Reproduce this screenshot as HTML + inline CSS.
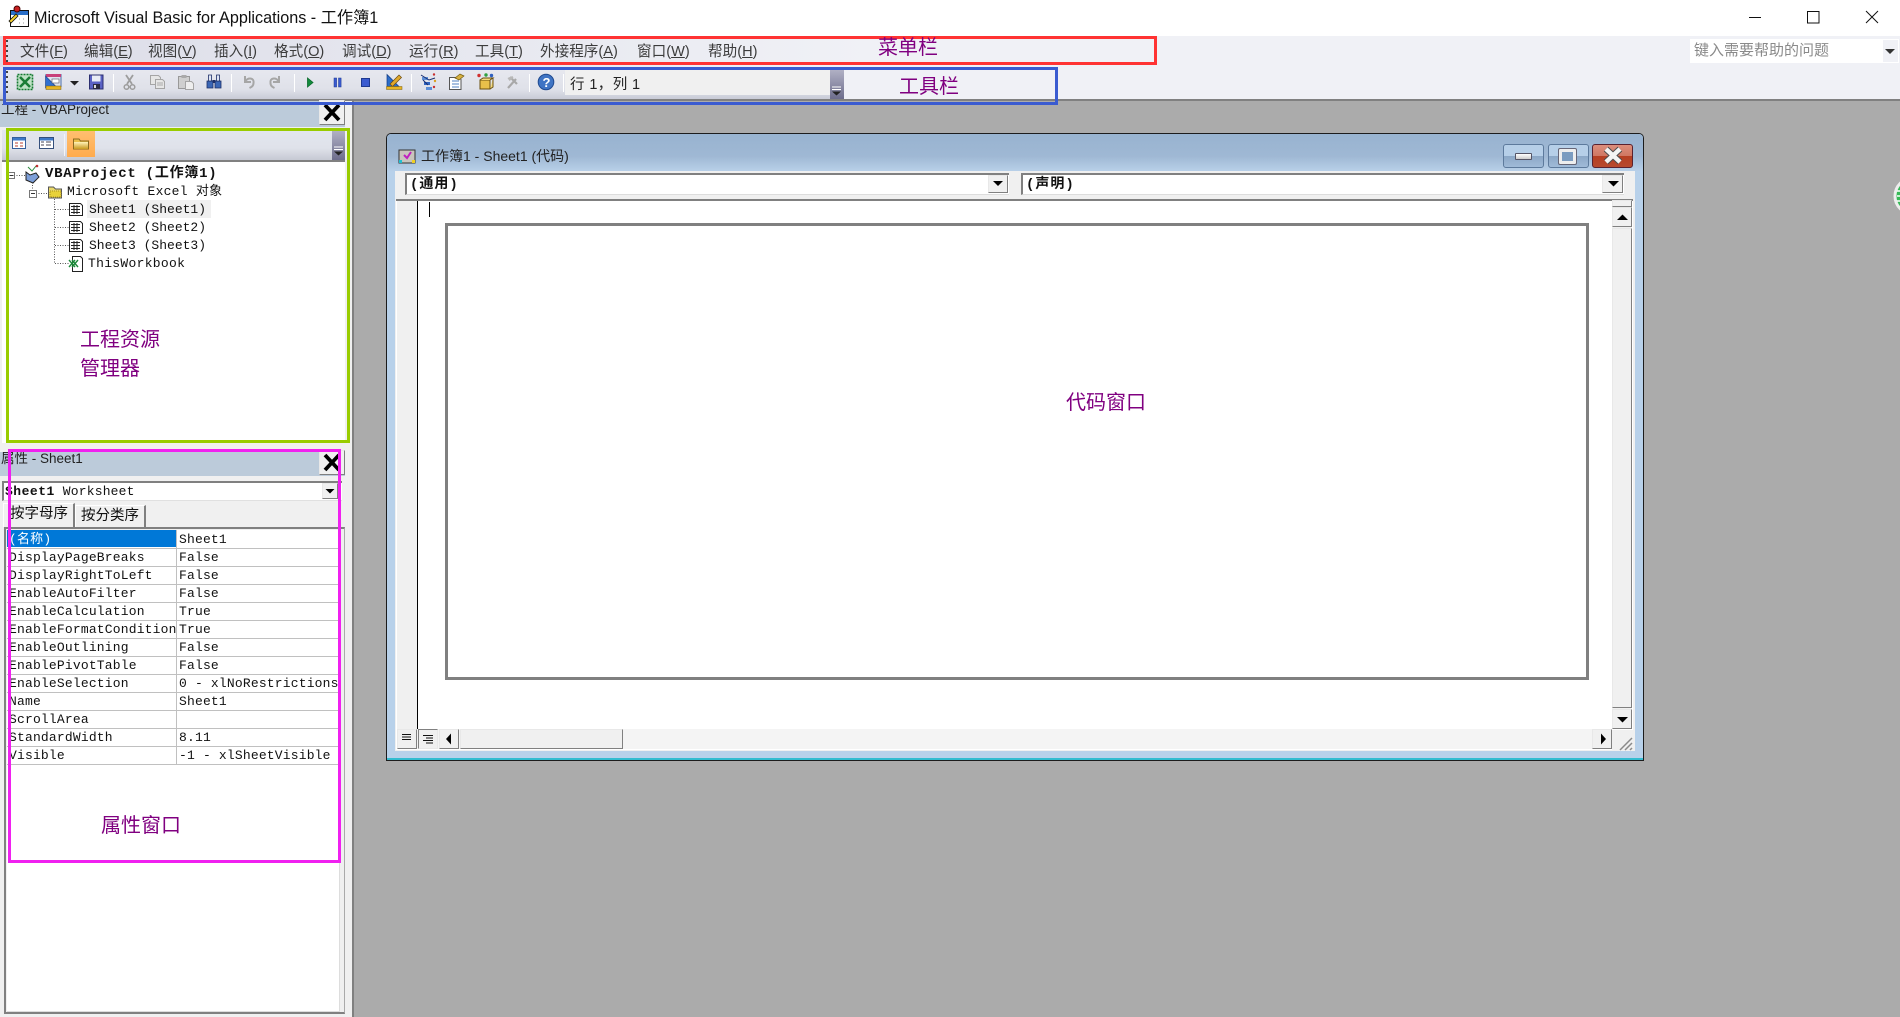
<!DOCTYPE html>
<html><head><meta charset="utf-8"><style>
html,body{margin:0;padding:0;width:1900px;height:1017px;overflow:hidden;background:#fff}
body{position:relative;font-family:"Liberation Sans","Noto Sans CJK SC",sans-serif}
.a{position:absolute;box-sizing:border-box}
.t{position:absolute;white-space:nowrap}
.m{font-size:14.6px;color:#3c3c3c;top:42px;height:20px;line-height:20px}
.c{font-family:"Liberation Mono","Noto Sans CJK SC",monospace;font-size:13px;letter-spacing:.18px;color:#111;white-space:nowrap;position:absolute;line-height:18px}
.lab{position:absolute;white-space:nowrap;color:#800080;font-size:20px;line-height:24px;font-family:"Liberation Sans","Noto Sans CJK SC",sans-serif}
.hd{font-size:13.5px;color:#222;line-height:18px}
.row{position:absolute;left:7px;width:331px;height:18px;border-bottom:1px solid #c0c0c0}
.btn{background:#f0f0f0;border:1px solid;border-color:#e8e8e8 #808080 #808080 #e8e8e8;position:absolute;box-sizing:border-box}
</style></head><body>

<!-- top chrome -->
<div class="a" style="left:0;top:36px;width:1900px;height:31px;background:linear-gradient(90deg,#dcdde8,#f0f1f6 870px)"></div>
<div class="a" style="left:0;top:67px;width:1900px;height:32px;background:#f0f1f6"></div>
<div class="a" style="left:0;top:67px;width:843px;height:32px;background:linear-gradient(#e8e9f0,#dfe1e9 70%,#c8cbd6)"></div>
<div class="a" style="left:0;top:99px;width:1900px;height:2px;background:#808080"></div>
<div class="a" style="left:352px;top:101px;width:1548px;height:916px;background:#ababab"></div>

<div class="t" style="left:34px;top:8px;font-size:16.2px;line-height:20px;color:#111">Microsoft Visual Basic for Applications - 工作簿1</div>

<div class="t m" style="left:20px">文件(<u>F</u>)</div>
<div class="t m" style="left:84px">编辑(<u>E</u>)</div>
<div class="t m" style="left:148px">视图(<u>V</u>)</div>
<div class="t m" style="left:214px">插入(<u>I</u>)</div>
<div class="t m" style="left:274px">格式(<u>O</u>)</div>
<div class="t m" style="left:342px">调试(<u>D</u>)</div>
<div class="t m" style="left:409px">运行(<u>R</u>)</div>
<div class="t m" style="left:475px">工具(<u>T</u>)</div>
<div class="t m" style="left:540px">外接程序(<u>A</u>)</div>
<div class="t m" style="left:637px">窗口(<u>W</u>)</div>
<div class="t m" style="left:708px">帮助(<u>H</u>)</div>

<div class="a" style="left:1690px;top:39px;width:209px;height:24px;background:#fff"></div>
<div class="a" style="left:1883px;top:40px;width:15px;height:22px;background:#f0f1f6"></div>
<div class="t" style="left:1694px;top:41px;font-size:15px;line-height:20px;color:#8a8a8a">键入需要帮助的问题</div>

<div class="a" style="left:565px;top:70px;width:265px;height:25px;background:#f0f0f0"></div>
<div class="a" style="left:830px;top:70px;width:14px;height:29px;background:linear-gradient(#b0b0c4,#6d6d8c)"></div>
<div class="t" style="left:570px;top:75px;font-size:14.5px;letter-spacing:.4px;line-height:20px;color:#222">行 1，列 1</div>

<!-- project panel -->
<div class="a" style="left:0;top:101px;width:352px;height:916px;background:#f0f0f0"></div>
<div class="a" style="left:352px;top:101px;width:2px;height:916px;background:#808080"></div>
<div class="a" style="left:0;top:101px;width:345px;height:26px;background:#bccbda"></div>
<div class="t hd" style="left:1px;top:101px">工程 - VBAProject</div>
<div class="btn" style="left:319px;top:100px;width:26px;height:25px;font-size:0"></div>
<div class="a" style="left:2px;top:130px;width:343px;height:30px;background:linear-gradient(#e3e6ee,#dfe2ea 60%,#c6c9d3)"></div>
<div class="a" style="left:67px;top:131px;width:28px;height:26px;background:linear-gradient(#ffbf70,#ffab4e)"></div>
<div class="a" style="left:332px;top:131px;width:13px;height:29px;background:linear-gradient(#b0b0c4,#6d6d8c)"></div>
<div class="a" style="left:2px;top:160px;width:343px;height:283px;background:#fff;border-top:2px solid #808080"></div>
<div class="a" style="left:87px;top:200px;width:124px;height:18px;background:#f0f0f0"></div>
<div class="c" style="left:45px;top:165px;font-weight:bold;font-size:14px;letter-spacing:.75px">VBAProject (工作簿1)</div>
<div class="c" style="left:67px;top:183px;letter-spacing:.25px">Microsoft Excel 对象</div>
<div class="c" style="left:89px;top:201px;letter-spacing:0">Sheet1 (Sheet1)</div>
<div class="c" style="left:89px;top:219px;letter-spacing:0">Sheet2 (Sheet2)</div>
<div class="c" style="left:89px;top:237px;letter-spacing:0">Sheet3 (Sheet3)</div>
<div class="c" style="left:88px;top:255px;letter-spacing:.3px">ThisWorkbook</div>

<!-- properties panel -->
<div class="a" style="left:0;top:452px;width:345px;height:24px;background:#bccbda"></div>
<div class="t hd" style="left:1px;top:450px">属性 - Sheet1</div>
<div class="btn" style="left:319px;top:450px;width:26px;height:25px"></div>
<div class="a" style="left:2px;top:481px;width:340px;height:20px;background:#fff;border-top:2px solid #808080;border-left:2px solid #808080;border-bottom:1px solid #e0e0e0"></div>
<div class="btn" style="left:322px;top:483px;width:16px;height:16px"></div>
<div class="c" style="left:5px;top:483px"><b style="letter-spacing:.5px">Sheet1</b> Worksheet</div>
<div class="a" style="left:3px;top:503px;width:72px;height:24px;background:#f0f0f0;border:1px solid #fff;border-right:2px solid #808080;border-bottom:none"></div>
<div class="a" style="left:75px;top:505px;width:71px;height:22px;background:#f0f0f0;border:1px solid #fff;border-right:2px solid #808080;border-bottom:none"></div>
<div class="t" style="left:10px;top:505px;font-size:14.5px;line-height:20px;color:#111;font-family:'Liberation Mono','Noto Sans CJK SC',monospace">按字母序</div>
<div class="t" style="left:81px;top:507px;font-size:14.5px;line-height:20px;color:#111;font-family:'Liberation Mono','Noto Sans CJK SC',monospace">按分类序</div>
<div class="a" style="left:4px;top:527px;width:341px;height:487px;background:#f0f0f0;border:2px solid #808080;border-right:1px solid #aaa;border-left:2px solid #808080"></div>
<div class="a" style="left:7px;top:530px;width:333px;height:482px;background:#fff;border-right:1px solid #ddd;border-bottom:1px solid #ddd"></div>
<div class="a" style="left:7px;top:530px;width:169px;height:17px;background:#0078d7"></div>

<div class="row" style="top:530px"></div><div class="row" style="top:548px"></div><div class="row" style="top:566px"></div><div class="row" style="top:584px"></div><div class="row" style="top:602px"></div><div class="row" style="top:620px"></div><div class="row" style="top:638px"></div><div class="row" style="top:656px"></div><div class="row" style="top:674px"></div><div class="row" style="top:692px"></div><div class="row" style="top:710px"></div><div class="row" style="top:728px"></div><div class="row" style="top:746px"></div>
<div class="a" style="left:176px;top:530px;width:1px;height:234px;background:#c0c0c0"></div>

<div class="c" style="left:9px;top:531px;color:#fff">(名称)</div><div class="c" style="left:179px;top:531px">Sheet1</div>
<div class="c" style="left:9px;top:549px">DisplayPageBreaks</div><div class="c" style="left:179px;top:549px">False</div>
<div class="c" style="left:9px;top:567px">DisplayRightToLeft</div><div class="c" style="left:179px;top:567px">False</div>
<div class="c" style="left:9px;top:585px">EnableAutoFilter</div><div class="c" style="left:179px;top:585px">False</div>
<div class="c" style="left:9px;top:603px">EnableCalculation</div><div class="c" style="left:179px;top:603px">True</div>
<div class="c" style="left:9px;top:621px">EnableFormatCondition</div><div class="c" style="left:179px;top:621px">True</div>
<div class="c" style="left:9px;top:639px">EnableOutlining</div><div class="c" style="left:179px;top:639px">False</div>
<div class="c" style="left:9px;top:657px">EnablePivotTable</div><div class="c" style="left:179px;top:657px">False</div>
<div class="c" style="left:9px;top:675px">EnableSelection</div><div class="c" style="left:179px;top:675px">0 - xlNoRestrictions</div>
<div class="c" style="left:9px;top:693px">Name</div><div class="c" style="left:179px;top:693px">Sheet1</div>
<div class="c" style="left:9px;top:711px">ScrollArea</div>
<div class="c" style="left:9px;top:729px">StandardWidth</div><div class="c" style="left:179px;top:729px">8.11</div>
<div class="c" style="left:9px;top:747px">Visible</div><div class="c" style="left:179px;top:747px">-1 - xlSheetVisible</div>

<!-- code window -->
<div class="a" style="left:386px;top:133px;width:1258px;height:628px;background:#b8d1ea;border:1px solid #1c1c1c;border-radius:5px 5px 0 0"></div>
<div class="a" style="left:387px;top:134px;width:1256px;height:37px;border-radius:4px 4px 0 0;background:linear-gradient(#98b3d0,#9fb8d4 60%,#b8d0e8)"></div>
<div class="a" style="left:387px;top:758px;width:1256px;height:2px;background:#33bcd0"></div>
<div class="a" style="left:395px;top:171px;width:1240px;height:580px;background:#f0f0f0"></div>
<div class="t" style="left:421px;top:146px;font-size:14px;line-height:20px;color:#222">工作簿1 - Sheet1 (代码)</div>

<div class="a" style="left:1503px;top:144px;width:41px;height:24px;border-radius:3px;border:1px solid #5d7a9c;background:linear-gradient(#b6cfe8 50%,#8ba7c6 50%,#a0bbd8)"></div>
<div class="a" style="left:1548px;top:144px;width:41px;height:24px;border-radius:3px;border:1px solid #5d7a9c;background:linear-gradient(#b6cfe8 50%,#8ba7c6 50%,#a0bbd8)"></div>
<div class="a" style="left:1592px;top:144px;width:41px;height:24px;border-radius:3px;border:1px solid #5a2230;background:linear-gradient(#dd8e7c,#cf7763 50%,#b63e22 50%,#b74a2f)"></div>
<div class="a" style="left:1515px;top:153px;width:17px;height:7px;background:linear-gradient(#fff,#ccc);border:1px solid #556;border-radius:1px"></div>
<div class="a" style="left:1559px;top:149px;width:17px;height:15px;background:#7b9cc0;border:3px solid #eee;outline:1px solid #667;border-radius:1px"></div>

<div class="a" style="left:405px;top:173px;width:604px;height:22px;background:#fff;border-top:2px solid #808080;border-left:2px solid #808080;border-bottom:1px solid #ddd"></div>
<div class="a" style="left:1021px;top:173px;width:603px;height:22px;background:#fff;border-top:2px solid #808080;border-left:2px solid #808080;border-bottom:1px solid #ddd"></div>
<div class="btn" style="left:988px;top:175px;width:20px;height:18px"></div>
<div class="btn" style="left:1602px;top:175px;width:21px;height:18px"></div>
<div class="c" style="left:410px;top:176px;font-weight:bold;font-size:14px;letter-spacing:1px">(通用)</div>
<div class="c" style="left:1026px;top:176px;font-weight:bold;font-size:14px;letter-spacing:1px">(声明)</div>

<div class="a" style="left:396px;top:199px;width:1237px;height:551px;background:#fff;border-top:2px solid #808080"></div>
<div class="a" style="left:397px;top:201px;width:20px;height:529px;background:#f0f0f0"></div>
<div class="a" style="left:417px;top:201px;width:1px;height:528px;background:#000"></div>
<div class="a" style="left:429px;top:202px;width:1px;height:15px;background:#000"></div>
<div class="a" style="left:445px;top:223px;width:1144px;height:457px;border:3px solid #808080;background:#fff"></div>

<div class="a" style="left:1612px;top:201px;width:20px;height:528px;background:#f0f0f0"></div>
<div class="btn" style="left:1612px;top:200px;width:20px;height:7px"></div>
<div class="btn" style="left:1612px;top:207px;width:20px;height:20px"></div>
<div class="btn" style="left:1612px;top:228px;width:20px;height:480px"></div>
<div class="btn" style="left:1612px;top:709px;width:20px;height:20px"></div>

<div class="a" style="left:397px;top:729px;width:1215px;height:20px;background:#f4f4f4"></div>
<div class="btn" style="left:397px;top:729px;width:20px;height:20px"></div>
<div class="btn" style="left:418px;top:729px;width:20px;height:20px;border-color:#808080 #e8e8e8 #e8e8e8 #808080"></div>
<div class="btn" style="left:439px;top:729px;width:20px;height:20px"></div>
<div class="btn" style="left:460px;top:729px;width:163px;height:20px"></div>
<div class="btn" style="left:1592px;top:729px;width:20px;height:20px"></div>
<div class="a" style="left:1612px;top:730px;width:21px;height:20px;background:#f0f0f0"></div>

<!-- all icons -->
<svg class="a" style="left:0;top:0" width="1900" height="1017" viewBox="0 0 1900 1017">
<!-- window controls -->
<path d="M1749 17.5h12" stroke="#111" fill="none"/>
<rect x="1807.5" y="11.5" width="11.5" height="11.5" fill="none" stroke="#111"/>
<path d="M1866 11l12 12M1878 11l-12 12" stroke="#111" fill="none"/>
<path d="M1885 49h10l-5 5z" fill="#333"/>
<!-- app icon -->
<g>
<rect x="10.5" y="10.5" width="18" height="16" fill="#fff" stroke="#111"/>
<rect x="11" y="11" width="17" height="4" fill="#2a6fc9"/>
<circle cx="17" cy="9" r="3" fill="#c82020" stroke="#400"/>
<path d="M9 21l7-7 2 2-7 7z" fill="#f6d02a" stroke="#111" stroke-width=".8"/>
<path d="M19 19h1M23 19h1M19 23h1M23 23h1" stroke="#999"/>
</g>
<!-- grips -->
<path d="M7 40v23M7 71v25" stroke="#444" stroke-width="2" stroke-dasharray="2 3" fill="none"/>
<!-- toolbar separators -->
<path d="M113.5 74v18M231.5 74v18M294.5 74v18M411.5 74v18M529.5 74v18M563.5 74v18" stroke="#fff" fill="none"/>
<!-- excel -->
<rect x="17.5" y="74.5" width="15" height="15" fill="#bfe2c6" stroke="#147a30" stroke-width="1.6" stroke-dasharray="2 1"/>
<path d="M20 77l10 10M30 77l-10 10" stroke="#1b7d36" stroke-width="2.6"/>
<!-- view icon -->
<rect x="46" y="74.5" width="15" height="12" fill="#dfe3ee" stroke="#4a6ea8"/>
<rect x="46" y="74" width="15" height="3" fill="#c8407a"/>
<path d="M45.5 76v12h12z" fill="#2f6fd0" stroke="#1a3d80" stroke-width=".6"/>
<rect x="52" y="79" width="7" height="4" fill="#fff" stroke="#667" stroke-width=".7"/>
<rect x="46" y="86" width="15" height="3.5" fill="#e6b422" stroke="#7a5f10" stroke-width=".5"/>
<path d="M70 81h9l-4.500 4.500z" fill="#222"/>
<!-- save -->
<rect x="89.500" y="75" width="13.500" height="14" fill="#5a62c4" stroke="#2c2f70"/>
<rect x="92" y="75.500" width="8.500" height="6" fill="#e8ecf5"/>
<rect x="93" y="84" width="7" height="5" fill="#2a2a40"/><rect x="94" y="85" width="2" height="3" fill="#ddd"/>
<!-- cut -->
<g stroke="#9d9d9d" fill="none"><path d="M126 75l6 9M133 75l-6 9" stroke-width="1.800"/><circle cx="126.500" cy="87" r="2.300" stroke-width="1.500"/><circle cx="132.500" cy="87" r="2.300" stroke-width="1.500"/></g>
<!-- copy -->
<g fill="#e6e6e6" stroke="#a5a5a5"><path d="M150.500 75.500h8l2 2v7h-10z"/><path d="M155.500 79.500h7l2 2v7h-9z"/></g>
<path d="M157 83h6M157 85h6" stroke="#aaa"/>
<!-- paste -->
<rect x="178.500" y="76.500" width="11" height="12" fill="#cfcfcf" stroke="#999"/><rect x="181.500" y="75" width="5" height="3" fill="#aaa"/>
<path d="M185.500 81.500h6l2 2v6h-8z" fill="#eee" stroke="#a5a5a5"/>
<!-- find -->
<g fill="#3a66b5" stroke="#1d2f66" stroke-width=".8"><path d="M207 81h6v7h-6zM215 81h6v7h-6z"/><path d="M208.500 75h3v6h-3zM216.500 75h3v6h-3z" fill="#dfe6f5"/></g>
<rect x="212.500" y="80" width="3" height="3" fill="#1d2f66"/>
<!-- undo redo -->
<path d="M245 76v6h6M245.500 81c3-4 9-3 8 2 0 3-2 4-4 5" fill="none" stroke="#a6a6a6" stroke-width="2"/>
<path d="M279 76v6h-6M278.500 81c-3-4-9-3-8 2 0 3 2 4 4 5" fill="none" stroke="#a6a6a6" stroke-width="2"/>
<!-- run -->
<path d="M307.500 78v9l5.500-4.500z" fill="#128a3c" stroke="#0b6b2c" stroke-width=".8"/>
<rect x="334" y="78" width="2.600" height="9" fill="#3a5bd0" stroke="#1f3a90" stroke-width=".5"/><rect x="338.500" y="78" width="2.600" height="9" fill="#3a5bd0" stroke="#1f3a90" stroke-width=".5"/>
<rect x="361.500" y="78.500" width="8" height="8" fill="#3a5bd0" stroke="#1f3a90"/>
<!-- design -->
<path d="M387 74.500v12h12z" fill="#2c6dc9" stroke="#123a80" stroke-width=".7"/>
<path d="M390 84l9-9 2.500 2.500-9 9z" fill="#e0a82a" stroke="#6a4a10" stroke-width=".7"/>
<rect x="386.500" y="86.500" width="15.500" height="3" fill="#e6b422" stroke="#7a5f10" stroke-width=".5"/>
<!-- project explorer -->
<g><rect x="422" y="77" width="6" height="3" fill="#5d8fd8"/><rect x="424" y="82" width="6" height="3" fill="#3065c0"/><rect x="426" y="87" width="6" height="3" fill="#5d8fd8"/><path d="M421 75l8 5 6-2M423 80l5 5" stroke="#1a2f70" fill="none" stroke-width="1"/><circle cx="434" cy="74.500" r="1.200" fill="#c83030"/><circle cx="435" cy="81" r="1.200" fill="#d9a020"/><circle cx="434" cy="87" r="1.200" fill="#c83030"/></g>
<!-- props -->
<path d="M449.500 77.500h10l1.500 2v10h-11.500z" fill="#fff" stroke="#555"/>
<path d="M452 81h7M452 84h7M452 87h7" stroke="#5080c0"/>
<path d="M455 78l5-4 4 2-5 4z" fill="#d7b040" stroke="#705a10" stroke-width=".7"/>
<!-- obj browser -->
<path d="M480 80h10v9h-10z" fill="#e8c04a" stroke="#6a5010"/><path d="M480 80l3-2h10l-3 2M490 89l3-2v-9" fill="#f4dc80" stroke="#6a5010"/>
<circle cx="479" cy="75.500" r="1.700" fill="#d03030"/><circle cx="486" cy="75" r="1.700" fill="#30a040"/><circle cx="491.500" cy="75.500" r="1.700" fill="#3060c0"/>
<!-- tools -->
<path d="M508 88l8-9M510 77l7 7" stroke="#a8a8a8" stroke-width="2.200"/><path d="M507.500 78l5-2 1 2-4 3z" fill="#b8b8b8"/>
<!-- help -->
<circle cx="546" cy="82" r="7.800" fill="#3f74c4" stroke="#1f4a90"/>
<text x="542.500" y="87" font-family="Liberation Sans" font-weight="bold" font-size="13" fill="#fff">?</text>
<!-- dropdown ends -->
<path d="M832 87h9M832 89.500h9" stroke="#fff"/><path d="M832 91.500h9l-4.500 4z" fill="#222"/>
<path d="M334 147h9M334 149.500h9" stroke="#fff"/><path d="M334 151.500h9l-4.500 4z" fill="#222"/>
<!-- close X -->
<path d="M325 105l14 15M339 105l-14 15" stroke="#000" stroke-width="3.800"/>
<path d="M325 455l14 15M339 455l-14 15" stroke="#000" stroke-width="3.800"/>
<!-- project tb -->
<rect x="12.500" y="137.500" width="13" height="11" fill="#fff" stroke="#35609c"/><rect x="13" y="138" width="12" height="2.500" fill="#3f78c8"/><path d="M15 143h3M20 143h3M15 146h3M20 146h3" stroke="#b84030"/>
<path d="M64.500 134v22" stroke="#f4f4f8"/>
<rect x="39.500" y="137.500" width="14" height="11" fill="#fff" stroke="#35507c"/><rect x="40" y="138" width="13" height="2.500" fill="#3f78c8"/><path d="M46 142h5M46 145h5M41 142h3M41 145h3" stroke="#445"/>
<defs><linearGradient id="fg" x1="0" y1="0" x2="0" y2="1"><stop offset="0" stop-color="#fff2b8"/><stop offset="1" stop-color="#c89a20"/></linearGradient></defs>
<path d="M73.500 139v10h15v-8h-8l-1.500-2z" fill="#e9c04a" stroke="#8a6a20"/><path d="M74 142h14v7h-14z" fill="url(#fg)"/>
<!-- tree -->
<path d="M14 175.500h11M32.500 180v10M36 193.500h12M54.500 199v65M55 209.500h14M55 227.500h14M55 245.500h14M55 263.500h14" stroke="#555" stroke-dasharray="1 1.500" fill="none"/>
<rect x="8.500" y="172.500" width="6" height="6" fill="#fff" stroke="#777"/><path d="M9.500 175.500h4" stroke="#333"/>
<rect x="29.500" y="190.500" width="7" height="7" fill="#fff" stroke="#777"/><path d="M31 193.500h4" stroke="#333"/>
<path d="M26 172l4 3 6-2 3 4-6 6-7-3z" fill="#7d9fd8" stroke="#222" stroke-width="1"/><path d="M28 167l4 4 4-5" stroke="#2b8a3e" fill="none"/><circle cx="37" cy="166" r="1.300" fill="#c03030"/>
<path d="M48.500 187v11h13v-9h-6l-2-2z" fill="#e9d868" stroke="#555"/><path d="M50 191h11v6h-11z" fill="#e8d23a" stroke="#a89020" stroke-dasharray="1 1"/>
<g id="s"><path d="M69.500 203.500h11l2 2v10h-13z" fill="#fff" stroke="#222"/><path d="M71 206.500h9M71 209.500h9M71 212.500h9M74 205v9M77 205v9" stroke="#222" fill="none"/></g>
<use href="#s" y="18"/><use href="#s" y="36"/>
<path d="M72.500 256.500h8l2 2v13h-10z" fill="#fff" stroke="#222"/><path d="M69 260l6 7M75 260l-6 7M72 260l6 7M78 260l-6 7" stroke="#1d8a3a" stroke-width="1.400"/>
<!-- props combos -->
<path d="M325.500 489h9l-4.500 4.500z" fill="#000"/>
<!-- code title icon -->
<rect x="399" y="150" width="16" height="13" fill="#c9c4bd" stroke="#333"/><path d="M404 155l3 3 4-6" stroke="#c020c0" fill="none" stroke-width="2"/>
<rect x="399" y="160" width="3" height="3" fill="#20c0d0"/><rect x="412" y="160" width="3" height="3" fill="#f0d020"/>
<!-- red close x -->
<path d="M1606 149l14 13M1620 149l-14 13" stroke="#4d4d4d" stroke-width="6.500"/><path d="M1606 149l14 13M1620 149l-14 13" stroke="#f4f4f4" stroke-width="4.500"/>
<!-- combo arrows -->
<path d="M993 181h10l-5 5z" fill="#000"/><path d="M1608 181h11l-5.500 5.500z" fill="#000"/>
<!-- scroll arrows -->
<path d="M1617 220h11l-5.500-5.500z" fill="#000"/><path d="M1617 717h11l-5.500 5.500z" fill="#000"/>
<path d="M451 733.500v11l-5-5.500z" fill="#000"/><path d="M1601 733.500v11l5-5.500z" fill="#000"/>
<path d="M402 734.500h9M402 737h9M402 739.500h9" stroke="#111" fill="none"/>
<path d="M423 735.500h10M426 738h7M423 740.500h10M426 743h7" stroke="#111" fill="none"/>
<!-- resize -->
<path d="M1620 750l12-12M1625 750l7-7M1630 750l2-2" stroke="#8a8a8a" stroke-width="1.500"/>
<!-- green floating -->
<circle cx="1913" cy="196" r="18" fill="#35b956" stroke="#eee" stroke-width="3"/>
<path d="M1897 196h8M1897 191h6M1897 201h6" stroke="#fff" stroke-width="1.500"/>
</svg>

<!-- annotations -->
<div class="a" style="left:3px;top:36px;width:1154px;height:29px;border:3px solid #ff3333"></div>
<div class="a" style="left:3px;top:67px;width:1055px;height:38px;border:3px solid #3a5bd0"></div>
<div class="a" style="left:6px;top:128px;width:344px;height:315px;border:3px solid #99cc00"></div>
<div class="a" style="left:8px;top:449px;width:333px;height:414px;border:3px solid #f020f0"></div>
<div class="lab" style="left:878px;top:36px">菜单栏</div>
<div class="lab" style="left:899px;top:75px">工具栏</div>
<div class="lab" style="left:80px;top:328px">工程资源</div>
<div class="lab" style="left:80px;top:357px">管理器</div>
<div class="lab" style="left:1066px;top:391px">代码窗口</div>
<div class="lab" style="left:101px;top:814px">属性窗口</div>
</body></html>
